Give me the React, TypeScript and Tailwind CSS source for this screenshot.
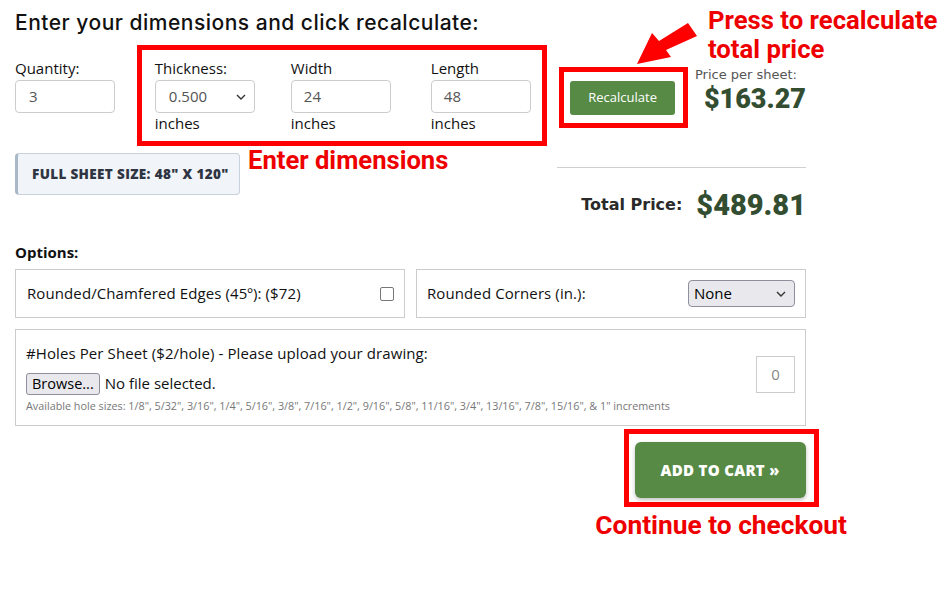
import React from "react";

const Chevron = ({ className = "" }: { className?: string }) => (
  <svg width="10" height="6" viewBox="0 0 10 6" className={className}>
    <path d="M1 1 L5 5 L9 1" fill="none" stroke="#333" strokeWidth="1.4" />
  </svg>
);

const red = { fontFamily: 'Roboto, sans-serif', fontWeight: 700 } as const;

export default function App() {
  const base = { fontFamily: '"Open Sans", "DejaVu Sans", sans-serif' };
  return (
    <div
      className="relative w-[950px] h-[600px] bg-white text-[#111] overflow-hidden"
      style={base}
    >
      <div className="w-[791px] ml-[15px] pt-[9px] flex flex-col">
        <h1
          className="text-[21px] leading-[28px] font-medium text-[#111] tracking-[0.5px]"
          style={{ fontFamily: 'Inter, "Open Sans", sans-serif', fontWeight: 500 }}
        >
          Enter your dimensions and click recalculate:
        </h1>

        {/* top row */}
        <div className="flex items-start mt-[8px]">
          <div className="w-[100px] mt-[13px] flex flex-col">
            <div className="text-[15px] leading-[20px]">Quantity:</div>
            <div className="mt-[2px] h-[33px] border border-[#ccc] rounded-[4px] flex items-center pl-[13px] text-[15px] text-[#555]">
              3
            </div>
          </div>

          <div className="ml-[22px] w-[411px] border-[5px] border-[#ff0000] pl-[13px] pt-[8px] pb-[8px] grid grid-cols-[136px_140px_100px]">
            <div className="flex flex-col">
              <div className="text-[15px] leading-[20px]">Thickness:</div>
              <div className="mt-[2px] w-[100px] h-[33px] border border-[#ccc] rounded-[4px] flex items-center justify-between pl-[13px] pr-[8px] text-[15px] text-[#555]">
                <span>0.500</span>
                <Chevron />
              </div>
              <div className="text-[15px] leading-[20px]">inches</div>
            </div>
            <div className="flex flex-col">
              <div className="text-[15px] leading-[20px]">Width</div>
              <div className="mt-[2px] w-[100px] h-[33px] border border-[#ccc] rounded-[4px] flex items-center pl-[12px] text-[15px] text-[#555]">
                24
              </div>
              <div className="text-[15px] leading-[20px]">inches</div>
            </div>
            <div className="flex flex-col">
              <div className="text-[15px] leading-[20px]">Length</div>
              <div className="mt-[2px] w-[100px] h-[33px] border border-[#ccc] rounded-[4px] flex items-center pl-[12px] text-[15px] text-[#555]">
                48
              </div>
              <div className="text-[15px] leading-[20px]">inches</div>
            </div>
          </div>

          <div className="ml-[12px] mt-[22px] w-[129px] h-[61px] border-[5px] border-[#ff0000] pl-[6px] pt-[9px]">
            <div className="w-[105px] h-[34px] bg-[#568a45] rounded-[3px] flex items-center justify-center text-white text-[13px]">
              Recalculate
            </div>
          </div>

          <div className="ml-[7px] mt-[22px] flex flex-col">
            <div
              className="text-[13px] leading-[16px] text-[#555]"
              style={{ fontFamily: '"DejaVu Sans", sans-serif' }}
            >
              Price per sheet:
            </div>
            <div
              className="ml-[9px] mt-[1px] text-[27px] leading-[30px] text-[#334d31]"
              style={{ fontFamily: 'Roboto, "Open Sans", sans-serif', fontWeight: 900 }}
            >
              $163.27
            </div>
          </div>
        </div>

        {/* second row */}
        <div className="flex items-start mt-[7px]">
          <div className="w-[225px] h-[42px] bg-[#f1f4f8] border border-[#c9d1da] border-l-[3px] border-l-[#a9b8c6] rounded-[4px] flex items-center pl-[14px]">
            <span className="text-[13.5px] font-extrabold text-[#2f3442] tracking-[0.35px]">
              FULL SHEET SIZE: 48" X 120"
            </span>
          </div>
          <div className="ml-auto w-[249px] mt-[14px] flex flex-col">
            <div className="h-px bg-[#cfcfcf]" />
            <div className="flex items-center justify-end mt-[21px]">
              <span
                className="text-[16px] font-bold text-[#2a2a2a] mr-[14px]"
                style={{ fontFamily: '"DejaVu Sans", sans-serif' }}
              >
                Total Price:
              </span>
              <span
                className="text-[29px] leading-[32px] text-[#334d31]"
                style={{ fontFamily: 'Roboto, "Open Sans", sans-serif', fontWeight: 900 }}
              >
                $489.81
              </span>
            </div>
          </div>
        </div>

        <div className="mt-[21px] text-[15px] leading-[20px] font-bold">Options:</div>

        <div className="mt-[7px] flex gap-[11px]">
          <div className="w-[390px] h-[49px] border border-[#ccc] flex items-center justify-between pl-[11px] pr-[10px]">
            <span className="text-[15px] tracking-[0.1px]">Rounded/Chamfered Edges (45º): ($72)</span>
            <span className="w-[14px] h-[14px] border border-[#777] rounded-[2px] bg-white" />
          </div>
          <div className="w-[390px] h-[49px] border border-[#ccc] flex items-center justify-between pl-[10px] pr-[10px]">
            <span className="text-[15px] tracking-[0.1px]">Rounded Corners (in.):</span>
            <div className="w-[107px] h-[27px] bg-[#e9e9ed] border border-[#8f8f9d] rounded-[4px] flex items-center justify-between pl-[5px] pr-[8px] text-[15px] text-black">
              <span>None</span>
              <Chevron />
            </div>
          </div>
        </div>

        <div className="mt-[11px] h-[97px] border border-[#ccc] flex items-center justify-between pl-[10px] pr-[10px]">
          <div className="flex flex-col mt-[2px]">
            <div className="text-[15px] leading-[20px] tracking-[0.1px]">
              #Holes Per Sheet ($2/hole) - Please upload your drawing:
            </div>
            <div className="flex items-center mt-[9px]">
              <span className="h-[22px] px-[5px] bg-[#e9e9ed] border border-[#8f8f9d] rounded-[3px] text-[14.5px] leading-[20px] text-black">
                Browse...
              </span>
              <span className="ml-[5px] text-[15px]">No file selected.</span>
            </div>
            <div className="mt-[3px] text-[10.8px] leading-[16px] text-[#777]">
              Available hole sizes: 1/8", 5/32", 3/16", 1/4", 5/16", 3/8", 7/16", 1/2", 9/16", 5/8", 11/16", 3/4", 13/16", 7/8", 15/16", &amp; 1" increments
            </div>
          </div>
          <div className="w-[39px] h-[37px] border border-[#ccc] flex items-center justify-center text-[15px] text-[#888] mb-[6px]">
            0
          </div>
        </div>

        <div className="self-end mr-[-41px] mt-[3px] flex flex-col items-center">
          <div className="w-[195px] h-[78px] border-[5px] border-[#ff0000] pl-[6px] pt-[8px]">
            <div className="w-[171px] h-[56px] bg-[#568a45] rounded-[6px] shadow-[0_2px_4px_rgba(0,0,0,0.25)] flex items-center justify-center text-white text-[15px] font-extrabold tracking-[0.3px]">
              ADD TO CART »
            </div>
          </div>
          <div className="mt-[3px] text-[26.3px] leading-[30px] text-[#ee0000]" style={red}>
            Continue to checkout
          </div>
        </div>
      </div>

      {/* annotations */}
      <div
        className="absolute left-[708px] top-[6px] text-[25.7px] leading-[29px] text-[#ee0000]"
        style={red}
      >
        Press to recalculate
        <br />
        total price
      </div>
      <div
        className="absolute left-[248px] top-[145px] text-[25.6px] leading-[30px] text-[#ee0000]"
        style={red}
      >
        Enter dimensions
      </div>
      <svg className="absolute left-0 top-0 pointer-events-none" width="950" height="600">
        <polygon points="637,64 652,33 659,41 688,23 697,36 666,50 671,57" fill="#ff0000" />
      </svg>
    </div>
  );
}
